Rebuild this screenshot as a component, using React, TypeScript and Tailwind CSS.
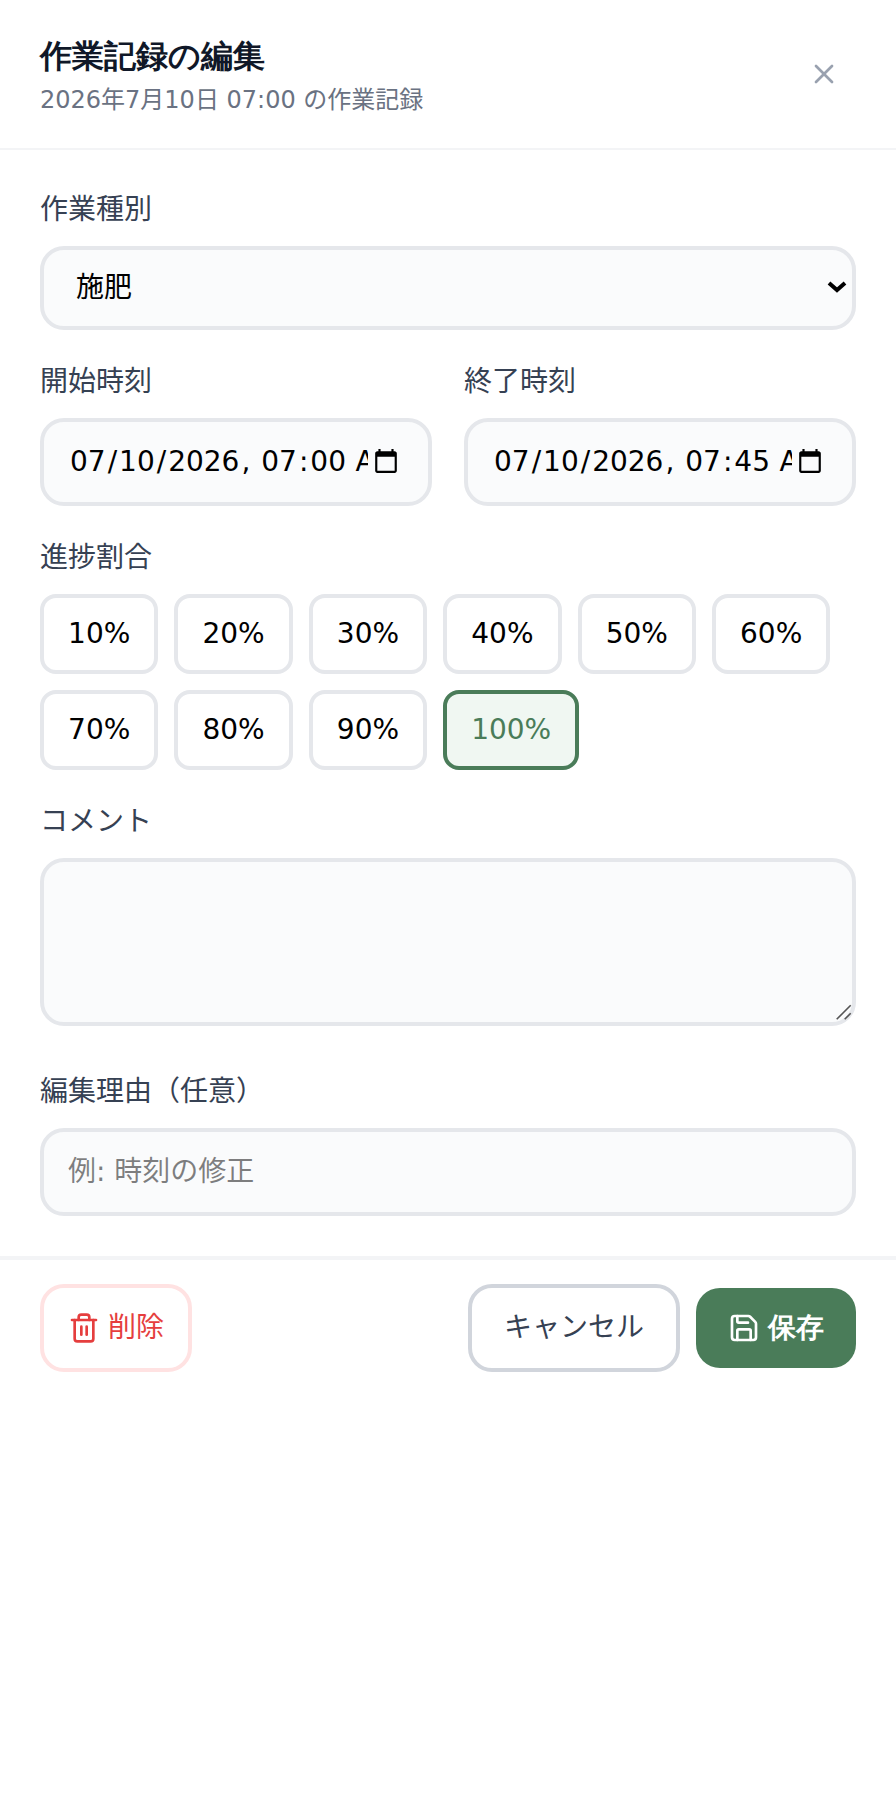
import { Save, Trash2, X } from "lucide-react";

const label = "mb-2 block text-sm text-gray-700";
const field =
  "w-full rounded-xl border-2 border-gray-200 bg-[#fafbfc] px-3 py-2.5 text-sm outline-none";
const percents = [10, 20, 30, 40, 50, 60, 70, 80, 90, 100];

export default function App() {
  return (
    <div className="bg-white [zoom:2] font-['DejaVu_Sans','Noto_Sans_CJK_JP',sans-serif]">
      <header className="flex items-center justify-between border-b border-gray-100 px-5 py-4">
        <div>
          <h2 className="font-['DejaVu_Sans',sans-serif] text-base font-bold text-gray-900">作業記録の編集</h2>
          <p className="mt-0.5 text-xs text-gray-500">2026年7月10日 07:00 の作業記録</p>
        </div>
        <button className="p-2 text-gray-400">
          <X size={16} />
        </button>
      </header>

      <div className="flex flex-col gap-4 px-5 py-5">
        <div>
          <label className={label}>作業種別</label>
          <div className="relative">
            <select
              className="h-[42px] w-full appearance-none rounded-xl border-2 border-gray-200 bg-[#fafbfc] pl-4 pr-6 text-sm outline-none"
              defaultValue="施肥"
            >
              <option>施肥</option>
              <option>収穫</option>
            </select>
            <svg
              className="pointer-events-none absolute right-[3.75px] top-1/2 -translate-y-1/2"
              width="12"
              height="12"
              viewBox="0 0 12 12"
              fill="none"
              stroke="black"
              strokeWidth="2"
            >
              <path d="M2 3.5 L6 7 L10 3.5" />
            </svg>
          </div>
        </div>

        <div className="grid grid-cols-2 gap-4">
          <div>
            <label className={label}>開始時刻</label>
            <input type="datetime-local" className={field} defaultValue="2026-07-10T07:00" />
          </div>
          <div>
            <label className={label}>終了時刻</label>
            <input type="datetime-local" className={field} defaultValue="2026-07-10T07:45" />
          </div>
        </div>

        <div>
          <label className={label}>進捗割合</label>
          <div className="flex flex-wrap gap-2">
            {percents.map((p) =>
              p === 100 ? (
                <button
                  key={p}
                  className="w-[68px] rounded-lg border-2 border-[#4a7c59] bg-[#f0f7f2] py-2 text-sm text-[#4a7c59]"
                >
                  {p}%
                </button>
              ) : (
                <button key={p} className="w-[59.2px] rounded-lg border-2 border-gray-200 bg-white py-2 text-sm">
                  {p}%
                </button>
              ),
            )}
          </div>
        </div>

        <div>
          <label className={label}>コメント</label>
          <div className="relative mb-[7px]">
            <textarea rows={3} className={`${field} block resize-none`} />
            <svg
              className="pointer-events-none absolute bottom-[2px] right-[2px]"
              width="10"
              height="10"
              viewBox="0 0 20 20"
              fill="none"
              stroke="#555"
              strokeWidth="1.6"
            >
              <path d="M4.7 17.3 L18.7 3.3 M12.7 17.3 L18.7 11.3" />
            </svg>
          </div>
        </div>

        <div>
          <label className={label}>編集理由（任意）</label>
          <input type="text" placeholder="例: 時刻の修正" className={field} />
        </div>
      </div>

      <footer className="flex items-center justify-between border-t-2 border-gray-100 px-5 py-3">
        <button className="flex items-center gap-1 rounded-xl border-2 border-red-100 px-3 py-2.5 text-sm text-[#e53e3e]">
          <Trash2 size={16} />
          削除
        </button>
        <div className="flex items-center gap-2">
          <button className="rounded-xl border-2 border-gray-300 px-4 py-2.5 text-sm text-gray-700">
            キャンセル
          </button>
          <button className="flex items-center gap-1 rounded-xl bg-[#4a7c59] px-4 py-2.5 font-['DejaVu_Sans',sans-serif] text-sm font-bold text-white">
            <Save size={16} />
            保存
          </button>
        </div>
      </footer>
    </div>
  );
}
